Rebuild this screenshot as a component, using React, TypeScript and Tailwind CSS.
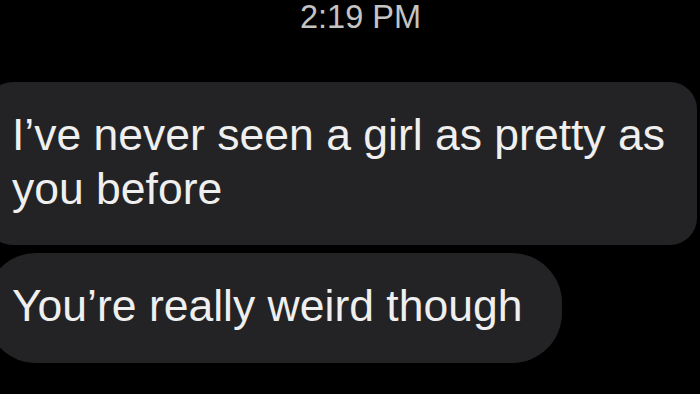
export default function App() {
  return (
    <div className="w-[700px] h-[394px] overflow-hidden bg-black" style={{ fontFamily: '"Liberation Sans", Arial, sans-serif' }}>
      <div className="flex justify-center pl-[21px] pt-[1px]">
        <div className="text-[32.5px] leading-[32px] text-[#c4c4c4]">2:19 PM</div>
      </div>
      <div className="mt-[49px] flex flex-col items-start gap-[8px]">
        <div className="-ml-[14px] w-[711px] rounded-[27px] bg-[#232325] pl-[26px] pr-[30px] pt-[26px] pb-[29px] text-[44.5px] leading-[54px] text-[#efefef]">
          I’ve never seen a girl as pretty as you before
        </div>
        <div className="-ml-[14px] w-[576px] rounded-[50px] bg-[#232325] pl-[26px] pr-[20px] pt-[26px] pb-[30px] text-[44.5px] leading-[54px] text-[#efefef]">
          You’re really weird though
        </div>
      </div>
    </div>
  );
}
